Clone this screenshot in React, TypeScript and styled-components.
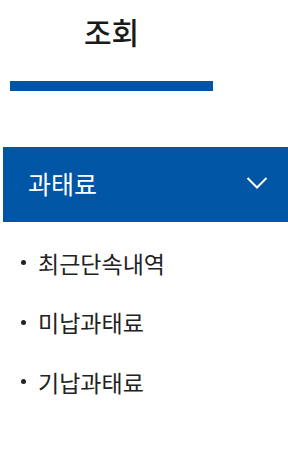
import React from 'react';
import styled, { createGlobalStyle } from 'styled-components';

const GlobalStyle = createGlobalStyle`
  html, body {
    margin: 0;
    padding: 0;
    background: #fff;
  }
  body {
    font-family: 'Noto Sans CJK KR', 'Noto Sans', sans-serif;
    color: #222;
  }
`;

const Page = styled.div`
  width: 288px;
  height: 458px;
  overflow: hidden;
  background: #fff;
`;

const TabBar = styled.nav`
  display: flex;
  padding-left: 10px;
`;

const Tab = styled.div<{ $active?: boolean }>`
  width: 203px;
  display: flex;
  flex-direction: column;
  align-items: center;
`;

const TabLabel = styled.span`
  font-size: 30px;
  font-weight: 500;
  line-height: 40px;
  margin-top: 11px;
  color: #1a1a1a;
`;

const TabIndicator = styled.div`
  align-self: stretch;
  height: 10px;
  margin-top: 30px;
  background: #0055a5;
`;

const Accordion = styled.section`
  margin-top: 56px;
  padding-left: 3px;
`;

const AccordionHeader = styled.button`
  width: 100%;
  height: 75px;
  border: 0;
  margin: 0;
  padding: 0 20px 4px 25px;
  display: flex;
  align-items: center;
  justify-content: space-between;
  background: #0055a5;
  color: #fff;
  font-family: inherit;
  font-size: 25px;
  font-weight: 400;
  cursor: pointer;
`;

const Chevron = styled.svg`
  width: 22px;
  height: 14px;
`;

const SubList = styled.ul`
  list-style: none;
  margin: 0;
  padding: 11px 0 0 18px;
`;

const SubItem = styled.li`
  display: flex;
  align-items: center;
  height: 59.5px;
  font-size: 23px;
  color: #222;

  &::before {
    content: '';
    width: 5px;
    height: 5px;
    border-radius: 50%;
    background: #222;
    margin-right: 12px;
  }
`;

const items = ['최근단속내역', '미납과태료', '기납과태료'];

function App(): JSX.Element {
  return (
    <Page>
      <GlobalStyle />
      <TabBar>
        <Tab $active>
          <TabLabel>조회</TabLabel>
          <TabIndicator />
        </Tab>
      </TabBar>
      <Accordion>
        <AccordionHeader type="button">
          과태료
          <Chevron viewBox="0 0 22 14" fill="none">
            <path d="M1.5 2L11 11.5L20.5 2" stroke="#fff" strokeWidth="2" />
          </Chevron>
        </AccordionHeader>
        <SubList>
          {items.map((item) => (
            <SubItem key={item}>{item}</SubItem>
          ))}
        </SubList>
      </Accordion>
    </Page>
  );
}

export default App;
